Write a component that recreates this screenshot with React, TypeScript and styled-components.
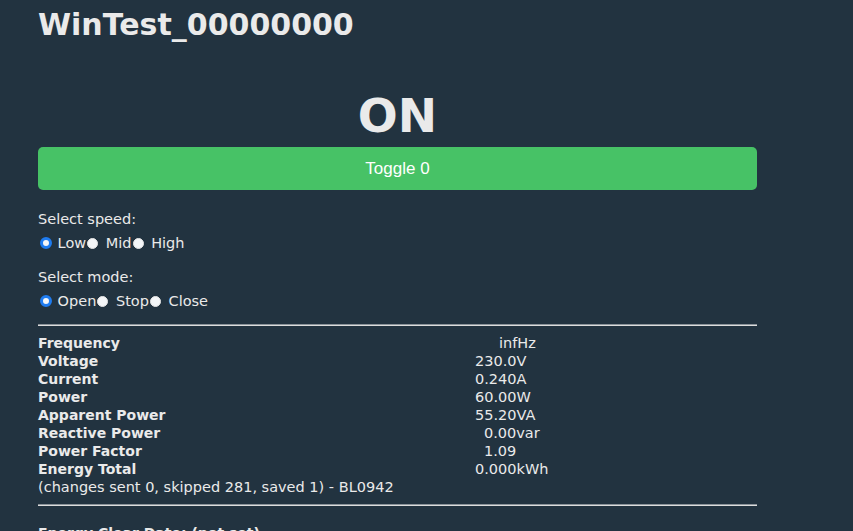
import React from 'react';
import styled, { createGlobalStyle } from 'styled-components';

const GlobalStyle = createGlobalStyle`
  html, body {
    margin: 0;
    padding: 0;
    background: #223340;
  }
  body {
    font-family: "DejaVu Sans", Verdana, sans-serif;
    font-size: 14.5px;
    color: #eaeaea;
    overflow: hidden;
  }
`;

const Page = styled.div`
  width: 719px;
  padding: 5px 0 0 38px;
`;

const Title = styled.h2`
  margin: 0;
  font-size: 30px;
  line-height: 40px;
  font-weight: bold;
`;

const State = styled.div`
  margin-top: 43px;
  text-align: center;
  font-size: 47px;
  line-height: 56px;
  font-weight: bold;
`;

const ToggleButton = styled.button`
  display: block;
  width: 100%;
  height: 43px;
  margin-top: 3px;
  border: 0;
  border-radius: 5px;
  background: #47c266;
  color: #fff;
  font-family: "Liberation Sans", Arial, sans-serif;
  font-size: 17px;
  cursor: pointer;
`;

const Group = styled.div<{ $top: number }>`
  margin-top: ${p => p.$top}px;
`;

const GroupLabel = styled.div`
  line-height: 18px;
`;

const RadioRow = styled.div`
  margin-top: 6px;
  line-height: 18px;
  display: flex;
  align-items: center;
  white-space: pre;
`;

const Radio = styled.span<{ $checked?: boolean }>`
  display: inline-block;
  box-sizing: border-box;
  width: ${p => (p.$checked ? '12px' : '11px')};
  height: ${p => (p.$checked ? '12px' : '11px')};
  margin: ${p => (p.$checked ? '0 1px 0 2px' : '0 3px 0 1px')};
  border-radius: 50%;
  background: #f4f6f8;
  border: ${p => (p.$checked ? '3px solid #1f7cf0' : '1px solid #e6e6e6')};
`;

const Rule = styled.hr<{ $top: number; $bottom: number }>`
  margin: ${p => p.$top}px 0 ${p => p.$bottom}px;
  border: 0;
  height: 2px;
  background: linear-gradient(#8a9299 0 1px, #dcdcdc 1px 2px);
`;

const Stats = styled.div`
  display: grid;
  grid-template-columns: 437px 1fr;
  line-height: 18px;
`;

const Name = styled.div`
  font-weight: bold;
  font-size: 14px;
`;

const Value = styled.div<{ $indent: number }>`
  padding-left: ${p => p.$indent}px;
`;

const Note = styled.div`
  grid-column: 1 / span 2;
`;

const Footer = styled.div`
  font-weight: bold;
  font-size: 14px;
  line-height: 18px;
`;

const stats = [
  { name: 'Frequency', value: 'infHz', indent: 24 },
  { name: 'Voltage', value: '230.0V', indent: 0 },
  { name: 'Current', value: '0.240A', indent: 0 },
  { name: 'Power', value: '60.00W', indent: 0 },
  { name: 'Apparent Power', value: '55.20VA', indent: 0 },
  { name: 'Reactive Power', value: '0.00var', indent: 9 },
  { name: 'Power Factor', value: '1.09', indent: 9 },
  { name: 'Energy Total', value: '0.000kWh', indent: 0 },
];

const RadioGroup = ({ label, options, top }: { label: string; options: string[]; top: number }) => (
  <Group $top={top}>
    <GroupLabel>{label}</GroupLabel>
    <RadioRow>
      {options.map((o, i) => (
        <React.Fragment key={o}>
          <Radio $checked={i === 0} />
          {' ' + o}
        </React.Fragment>
      ))}
    </RadioRow>
  </Group>
);

export default function App() {
  return (
    <>
      <GlobalStyle />
      <Page>
        <Title>WinTest_00000000</Title>
        <State>ON</State>
        <ToggleButton>Toggle 0</ToggleButton>

        <RadioGroup label="Select speed:" options={['Low', 'Mid', 'High']} top={20} />
        <RadioGroup label="Select mode:" options={['Open', 'Stop', 'Close']} top={16} />

        <Rule $top={14} $bottom={8} />

        <Stats>
          {stats.map(s => (
            <React.Fragment key={s.name}>
              <Name>{s.name}</Name>
              <Value $indent={s.indent}>{s.value}</Value>
            </React.Fragment>
          ))}
          <Note>(changes sent 0, skipped 281, saved 1) - BL0942</Note>
        </Stats>

        <Rule $top={8} $bottom={18} />

        <Footer>Energy Clear Date: (not set)</Footer>
      </Page>
    </>
  );
}
